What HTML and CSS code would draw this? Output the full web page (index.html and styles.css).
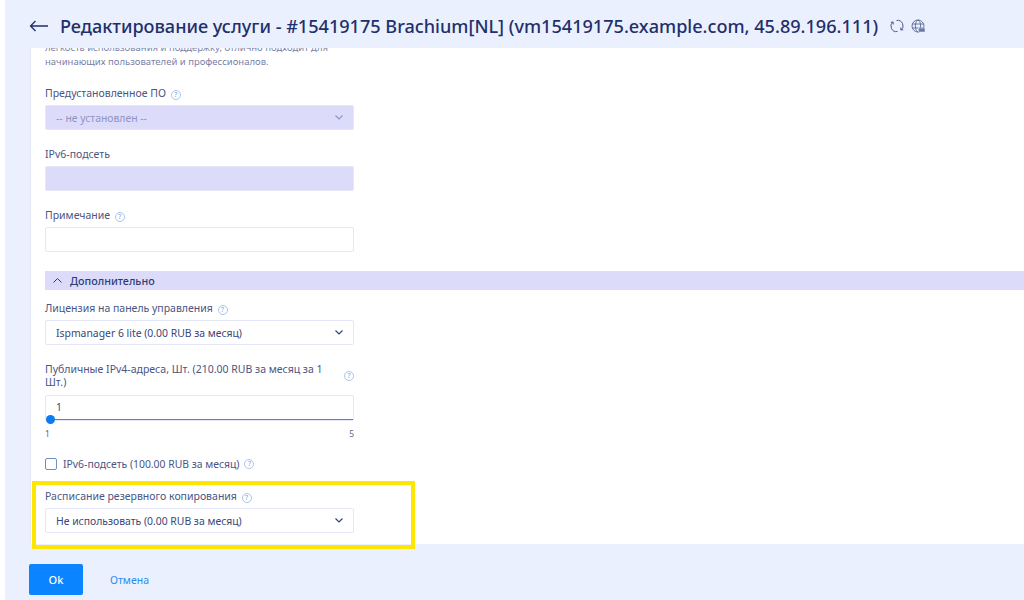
FILE: index.html
```html
<!DOCTYPE html>
<html>
<head>
    <meta charset="UTF-8">
    <title>Редактирование услуги</title>
    <link rel="stylesheet" href="styles.css">
</head>
<body>
    <div class="page">
        <div class="title-bar">
            <svg class="back" width="20" height="12" viewBox="0 0 20 12"><path d="M19 6H1.500M6.500 1 1.500 6l5 5" fill="none" stroke="#1f2f6b" stroke-width="1.300"/></svg>
            <h1>Редактирование услуги - #15419175 Brachium[NL] (vm15419175.example.com, 45.89.196.111)</h1>
            <svg class="bar-icon" width="14" height="14" viewBox="0 0 14 14" fill="none" stroke="#4a5a90" stroke-width="1"><path d="M7.500 12.500A5.500 5.500 0 0 1 3 2.800M6.500 1.500A5.500 5.500 0 0 1 11 11.200"/><path d="M.8 3.200H3.200V5.500M13.200 10.800H10.800V8.500"/></svg>
            <svg class="bar-icon" width="14" height="14" viewBox="0 0 14 14" fill="none" stroke="#4a5a90" stroke-width=".8"><circle cx="7" cy="7" r="6"/><ellipse cx="7" cy="7" rx="2.600" ry="6"/><path d="M1 5h12M1 9h12"/><rect x="7.500" y="9" width="6.500" height="4" fill="#6b7aa8" stroke="#eaf0fe" stroke-width=".5"/></svg>
        </div>

        <div class="panel">
            <p class="hint">легкость использования и поддержку, отлично подходит для начинающих пользователей и профессионалов.</p>

            <div class="field">
                <label>Предустановленное ПО <span class="help">?</span></label>
                <div class="box box-disabled">
                    <span>-- не установлен --</span>
                    <svg class="chevron" width="8" height="5" viewBox="0 0 8 5"><path d="M.5.5 4 4 7.500.5" fill="none" stroke="#8f93c4" stroke-width="1.100"/></svg>
                </div>
            </div>

            <div class="field">
                <label>IPv6-подсеть</label>
                <div class="box box-disabled"></div>
            </div>

            <div class="field">
                <label>Примечание <span class="help">?</span></label>
                <div class="box"></div>
            </div>

            <div class="section-bar">
                <svg width="9" height="5" viewBox="0 0 9 5"><path d="M.5 4.500l4-4 4 4" fill="none" stroke="#2d3c78" stroke-width="1"/></svg>
                <span>Дополнительно</span>
            </div>

            <div class="field field-first">
                <label>Лицензия на панель управления <span class="help">?</span></label>
                <div class="box">
                    <span>Ispmanager 6 lite (0.00 RUB за месяц)</span>
                    <svg class="chevron" width="8" height="5" viewBox="0 0 8 5"><path d="M.5.5 4 4 7.500.5" fill="none" stroke="#2d3c78" stroke-width="1.100"/></svg>
                </div>
            </div>

            <div class="field field-slider">
                <label class="label-wrap"><span>Публичные IPv4-адреса, Шт. (210.00 RUB за месяц за 1 Шт.)</span> <span class="help">?</span></label>
                <div class="box box-slider">
                    <span>1</span>
                    <div class="track"></div>
                    <div class="knob"></div>
                </div>
                <div class="ticks"><span>1</span><span>5</span></div>
            </div>

            <div class="check-row">
                <span class="checkbox"></span>
                <span>IPv6-подсеть (100.00 RUB за месяц)</span>
                <span class="help">?</span>
            </div>

            <div class="field field-last">
                <label>Расписание резервного копирования <span class="help">?</span></label>
                <div class="box">
                    <span>Не использовать (0.00 RUB за месяц)</span>
                    <svg class="chevron" width="8" height="5" viewBox="0 0 8 5"><path d="M.5.5 4 4 7.500.5" fill="none" stroke="#2d3c78" stroke-width="1.100"/></svg>
                </div>
            </div>
        </div>

        <div class="actions">
            <button class="btn-ok">Ok</button>
            <a class="btn-cancel" href="#">Отмена</a>
        </div>

        <div class="highlight"></div>
    </div>
</body>
</html>
```

FILE: styles.css
```css
* {
    box-sizing: border-box;
}
html, body {
    margin: 0;
    height: 100%;
    overflow: hidden;
}
body {
    font-family: "Noto Sans", "Open Sans", sans-serif;
    background-color: #fff;
    color: #2d3c78;
}
.page {
    position: relative;
    height: 600px;
    margin-left: 5px;
    background-color: #eaf0fe;
    display: flex;
    flex-direction: column;
}
.title-bar {
    height: 48px;
    padding: 3px 0 0 24px;
    display: flex;
    align-items: center;
    flex-shrink: 0;
}
.title-bar h1 {
    margin: 0 12px 0 11px;
    font-size: 18.100px;
    font-weight: 500;
    color: #1f2f6b;
    white-space: nowrap;
}
.bar-icon {
    margin-right: 7px;
}
.panel {
    margin-left: 25px;
    height: 496px;
    padding: 0 14px;
    background-color: #fff;
    border-left: 1px solid #e4e6fa;
    overflow: hidden;
    flex-shrink: 0;
}
.hint {
    width: 309px;
    margin: -7px 0 0;
    font-size: 9.500px;
    line-height: 14px;
    color: #7b7fa8;
}
.field {
    width: 309px;
    margin-top: 17px;
}
.field label {
    display: block;
    font-size: 10.500px;
    line-height: 14px;
    margin-bottom: 5px;
    color: #4a5584;
}
.help {
    display: inline-block;
    width: 10px;
    height: 10px;
    margin-left: 2px;
    border: 1px solid #a9c6ef;
    border-radius: 50%;
    font-size: 7px;
    line-height: 8px;
    text-align: center;
    color: #7fa3da;
}
.box {
    position: relative;
    height: 25px;
    padding: 0 10px;
    display: flex;
    align-items: center;
    justify-content: space-between;
    background-color: #fff;
    border: 1px solid #e4e6fa;
    border-radius: 2px;
    font-size: 10.400px;
    color: #3a4678;
}
.box-disabled {
    background-color: #dcdcfa;
    color: #9093c4;
}
.section-bar {
    height: 19px;
    margin-top: 19px;
    margin-right: -14px;
    padding: 0 0 1px 8px;
    display: flex;
    align-items: center;
    gap: 8px;
    background-color: #dcdcfa;
    font-size: 10.800px;
    font-weight: 500;
    color: #2d3c78;
}
.field-first {
    margin-top: 11px;
}
.field-slider {
    margin-top: 18px;
}
.label-wrap {
    display: flex !important;
    align-items: center;
    justify-content: space-between;
    line-height: 13px !important;
    margin-bottom: 6px !important;
}
.label-wrap span:first-child {
    width: 285px;
}
.box-slider {
    height: 26px;
    align-items: flex-start;
    padding-top: 4px;
}
.track {
    position: absolute;
    left: 0;
    right: 0;
    bottom: 0;
    height: 1px;
    background-color: #5a80c8;
}
.knob {
    position: absolute;
    left: 0;
    bottom: -4px;
    width: 9px;
    height: 9px;
    border-radius: 50%;
    background-color: #0a7cf0;
}
.ticks {
    display: flex;
    justify-content: space-between;
    margin-top: 8px;
    font-size: 8.500px;
    line-height: 10px;
    color: #5a6490;
}
.check-row {
    margin-top: 18px;
    display: flex;
    align-items: center;
    gap: 6px;
    font-size: 10.400px;
    line-height: 14px;
    color: #4a5584;
}
.check-row .help {
    margin-left: -1px;
}
.checkbox {
    width: 12px;
    height: 12px;
    border: 1px solid #6f8fc9;
    border-radius: 2px;
}
.field-last {
    margin-top: 18px;
}
.actions {
    height: 56px;
    padding: 20px 0 0 24px;
    display: flex;
    align-items: flex-start;
}
.btn-ok {
    width: 54px;
    height: 31px;
    border: none;
    border-radius: 2px;
    background-color: #0a84ff;
    color: #fff;
    font-family: inherit;
    font-size: 11px;
    font-weight: 500;
}
.btn-cancel {
    margin: 9px 0 0 27px;
    font-size: 10.500px;
    line-height: 14px;
    color: #2b8cf0;
    text-decoration: none;
}
.highlight {
    position: absolute;
    left: 27px;
    top: 481px;
    width: 383px;
    height: 68px;
    border: 4px solid #ffe600;
}
```
